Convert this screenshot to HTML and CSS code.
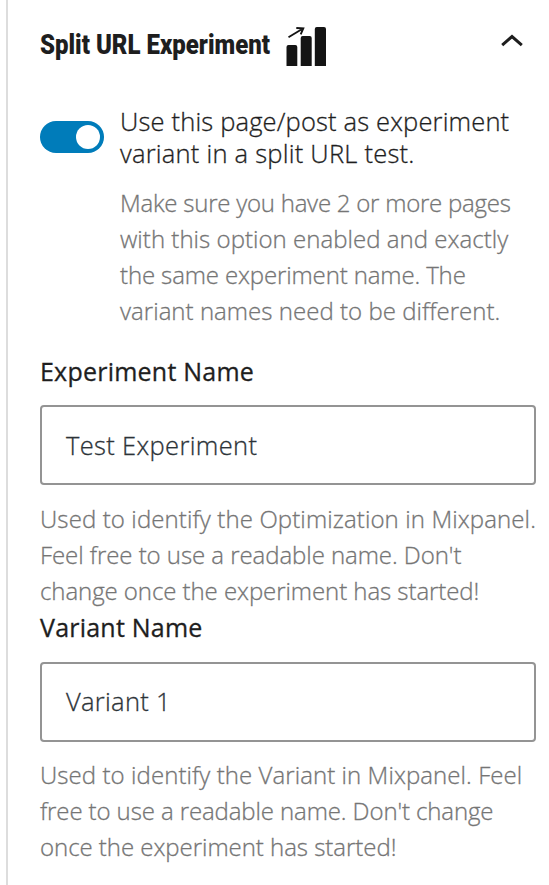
FILE: index.html
```html
<!DOCTYPE html>
<html lang="en">
<head>
<meta charset="utf-8">
<title>Split URL Experiment</title>
<link rel="stylesheet" href="styles.css">
</head>
<body>
<section class="panel">
  <header class="header">
    <h2 class="title"><span class="title-text">Split URL Experiment</span></h2>
    <svg class="chart" width="42" height="40" viewBox="0 0 42 40" aria-hidden="true">
      <path d="M0.5 40V21Q.5 19 2.500 19H9.300Q11.300 19 11.300 21V40ZM14.700 40V12Q14.700 10 16.700 10H23.700Q25.700 10 25.700 12V40ZM28.800 40V3Q28.800 1 30.800 1H38Q40 1 40 3V40Z" fill="#141414"/>
      <path d="M2.500 11.200L17 2.500M10.300 2L17.300 2.300L14.700 8.300" fill="none" stroke="#141414" stroke-width="1.900"/>
    </svg>
    <svg class="chevron" width="24" height="16" viewBox="0 0 24 16" aria-hidden="true"><path d="M2.200 12.200L12 3.600L21.800 12.200" fill="none" stroke="#1e1e1e" stroke-width="3"/></svg>
  </header>
  <div class="option">
    <span class="toggle" role="switch" aria-checked="true"><span class="knob"></span></span>
    <div>
      <p class="option-label"><span class="line a1">Use this page/post as experiment</span> <span class="line a2">variant in a split URL test.</span></p>
      <p class="help"><span class="line b1">Make sure you have 2 or more pages</span> <span class="line b2">with this option enabled and exactly</span> <span class="line b3">the same experiment name. The</span> <span class="line b4">variant names need to be different.</span></p>
    </div>
  </div>
  <div class="field">
    <div class="label"><span class="line c1">Experiment Name</span></div>
    <div class="input"><span class="line c2">Test Experiment</span></div>
    <p class="help"><span class="line d1">Used to identify the Optimization in Mixpanel.</span> <span class="line d2">Feel free to use a readable name. Don't</span> <span class="line d3">change once the experiment has started!</span></p>
  </div>
  <div class="field second">
    <div class="label"><span class="line e1">Variant Name</span></div>
    <div class="input"><span class="line e2">Variant 1</span></div>
    <p class="help"><span class="line f1">Used to identify the Variant in Mixpanel. Feel</span> <span class="line f2">free to use a readable name. Don't change</span> <span class="line f3">once the experiment has started!</span></p>
  </div>
</section>
</body>
</html>
```
FILE: styles.css
```css
* { box-sizing: border-box; }
body { margin: 0; background: #fff; color: #1e1e1e; font-family: "Open Sans", "Noto Sans", sans-serif; overflow: hidden; }
p, h2 { margin: 0; }
.panel { height: 885px; margin-left: 6px; border-left: 2px solid #ddd; padding: 26px 13px 0 32px; overflow: hidden; }
.header { display: flex; height: 40px; }
.title { width: 246px; font: 900 27.500px/38px Roboto, sans-serif; white-space: nowrap; }
.title-text { display: inline-block; transform: scaleX(.872); transform-origin: 0 50%; }
.chevron { margin: 7px 12px 0 auto; }
.option { display: flex; margin-top: 39px; }
.toggle { width: 64px; height: 32px; margin: 16px 16px 0 0; flex: none; border-radius: 16px; background: #007cba; padding: 4px; display: flex; justify-content: flex-end; }
.knob { width: 24px; height: 24px; border-radius: 50%; background: #fff; }
.line { display: block; width: max-content; white-space: nowrap; -webkit-text-stroke: .3px currentColor; }
.option-label { font-size: 25.500px; line-height: 32px; font-weight: 300; }
.help { font-size: 24px; line-height: 36px; font-weight: 300; color: #757575; }
.option .help { margin-top: 16px; }
.label { font-size: 25px; line-height: 32px; height: 32px; font-weight: 400; }
.field { margin-top: 26px; }
.field.second { margin-top: 2px; }
.input { width: 496px; height: 80px; margin: 18px 0 16px; border: 2px solid #949494; border-radius: 4px; padding: 0 24px; display: flex; align-items: center; font-size: 25.500px; font-weight: 300; color: #2c3338; }
.second .input { margin-top: 19px; margin-bottom: 15px; padding-bottom: 2px; }
.a1 { letter-spacing: .16px; }
.a2 { letter-spacing: .23px; }
.b1 { letter-spacing: -.24px; }
.b2 { letter-spacing: .03px; }
.b3 { letter-spacing: -.13px; }
.b4 { letter-spacing: .03px; }
.c1 { letter-spacing: .23px; }
.c2 { letter-spacing: .34px; }
.d1 { letter-spacing: .11px; }
.d2 { letter-spacing: -.06px; }
.d3 { letter-spacing: -.07px; }
.e1 { letter-spacing: .23px; }
.e2 { letter-spacing: .3px; }
.f1 { letter-spacing: .07px; }
.f2 { letter-spacing: -.11px; }
.f3 { letter-spacing: -.04px; }
```
